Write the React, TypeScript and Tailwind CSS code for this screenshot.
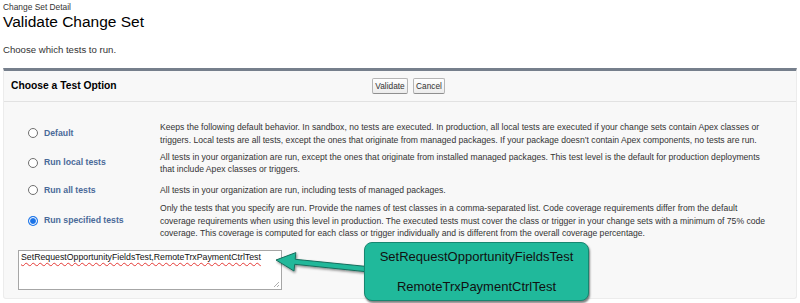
import React from "react";

const rows: { label: string; checked?: boolean; cls: string; lines: string[] }[] = [
  {
    label: "Default",
    cls: "mt-0",
    lines: [
      "Keeps the following default behavior. In sandbox, no tests are executed. In production, all local tests are executed if your change sets contain Apex classes or",
      "triggers. Local tests are all tests, except the ones that originate from managed packages. If your package doesn\u2019t contain Apex components, no tests are run.",
    ],
  },
  {
    label: "Run local tests",
    cls: "mt-[4.5px]",
    lines: [
      "All tests in your organization are run, except the ones that originate from installed managed packages. This test level is the default for production deployments",
      "that include Apex classes or triggers.",
    ],
  },
  {
    label: "Run all tests",
    cls: "mt-[8px]",
    lines: ["All tests in your organization are run, including tests of managed packages."],
  },
  {
    label: "Run specified tests",
    checked: true,
    cls: "mt-[5.5px]",
    lines: [
      "Only the tests that you specify are run. Provide the names of test classes in a comma-separated list. Code coverage requirements differ from the default",
      "coverage requirements when using this level in production. The executed tests must cover the class or trigger in your change sets with a minimum of 75% code",
      "coverage. This coverage is computed for each class or trigger individually and is different from the overall coverage percentage.",
    ],
  },
];

function Radio({ checked }: { checked?: boolean }) {
  if (checked) {
    return (
      <span className="flex h-[10px] w-[10px] items-center justify-center rounded-full bg-[#1a73e8]">
        <span className="h-[8px] w-[8px] rounded-full border-[1.5px] border-white bg-[#1a73e8]" />
      </span>
    );
  }
  return <span className="h-[10px] w-[10px] rounded-full border border-[#6f6f6f] bg-white" />;
}

export default function App() {
  return (
    <div
      className="relative h-[303px] w-[800px] overflow-hidden bg-white text-[#222]"
      style={{ fontFamily: '"Liberation Sans", Arial, sans-serif' }}
    >
      <div className="px-[3px] pt-[2px]">
        <div className="text-[8.4px] leading-[10px] text-[#333]">Change Set Detail</div>
        <div className="text-[15.5px] leading-[19px] text-[#000]">Validate Change Set</div>
        <div className="mt-[13px] text-[9.6px] leading-[12px] text-[#333]">Choose which tests to run.</div>
      </div>

      <div className="mx-[3px] mt-[12px] h-[231px] rounded-b-[3px] border-x border-b border-t-[3px] border-x-[#ececec] border-b-[#ececec] border-t-[#767f8c] bg-[#f8f8f8]">
        <div className="flex h-[31px] items-center border-b border-[#e2e2e2] pl-[7px]">
          <div className="w-[361px] text-[10.3px] font-bold text-[#000]">Choose a Test Option</div>
          <div className="flex gap-[5px]">
            <div className="flex h-[16px] w-[36px] items-center justify-center rounded-[2px] border border-[#b5b5b5] border-b-[#8f8f8f] bg-gradient-to-b from-white to-[#ececec] text-[8.3px] text-[#333]">
              Validate
            </div>
            <div className="flex h-[16px] w-[32px] items-center justify-center rounded-[2px] border border-[#b5b5b5] border-b-[#8f8f8f] bg-gradient-to-b from-white to-[#ececec] text-[8.3px] text-[#333]">
              Cancel
            </div>
          </div>
        </div>

        <div className="flex flex-col pt-[19px]">
          {rows.map((r) => (
            <div key={r.label} className={`flex items-center ${r.cls}`}>
              <div className="flex w-[156px] items-center pl-[24px]">
                <Radio checked={r.checked} />
                <span className="ml-[6px] text-[8.7px] font-bold text-[#4a6a98]">{r.label}</span>
              </div>
              <div className="flex flex-col text-[8.6px] leading-[12.5px] text-[#333]">
                {r.lines.map((l, i) => (
                  <span key={i} className="whitespace-nowrap">
                    {l}
                  </span>
                ))}
              </div>
            </div>
          ))}
        </div>

        <div className="relative ml-[14px] mt-[10px] h-[40px] w-[264px] border border-[#a6a6a6] bg-white px-[2px] pt-[1px] text-[8.75px] leading-[11px] text-[#111]">
          <span className="underline decoration-[#e53935] decoration-wavy decoration-1 underline-offset-[2px]">
            SetRequestOpportunityFieldsTest,RemoteTrxPaymentCtrlTest
          </span>
          <svg className="absolute bottom-[1px] right-[1px]" width="7" height="7" viewBox="0 0 7 7">
            <line x1="6" y1="1" x2="1" y2="6" stroke="#999" strokeWidth="0.8" />
            <line x1="6" y1="4" x2="4" y2="6" stroke="#999" strokeWidth="0.8" />
          </svg>
        </div>
      </div>

      <svg className="pointer-events-none absolute left-0 top-0" width="800" height="303" viewBox="0 0 800 303">
        <defs>
          <filter id="sh" x="-20%" y="-20%" width="140%" height="160%">
            <feDropShadow dx="1" dy="1.5" stdDeviation="1" floodColor="#000" floodOpacity="0.45" />
          </filter>
        </defs>
        <polygon
          points="367,266.5 295.2,259.3 295.8,252.6 276,260 294,271 294.7,264.3 367,271.8"
          fill="#21b89a"
          stroke="#196e5d"
          strokeWidth="1"
          strokeLinejoin="round"
          filter="url(#sh)"
        />
      </svg>

      <div className="absolute left-[364px] top-[242px] flex h-[59px] w-[225px] flex-col items-center justify-center gap-[12px] rounded-[8px] border border-[#178670] bg-[#20b99b] text-[13px] leading-[18px] text-[#111] shadow-[1px_2px_2px_rgba(0,0,0,0.5)]">
        <span>SetRequestOpportunityFieldsTest</span>
        <span>RemoteTrxPaymentCtrlTest</span>
      </div>
    </div>
  );
}
